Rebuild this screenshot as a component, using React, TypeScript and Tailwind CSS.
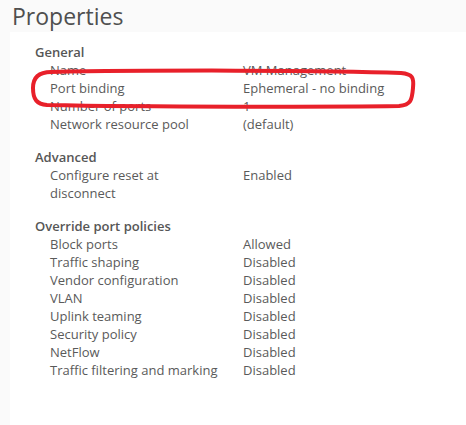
const sections = [
  {
    title: 'General',
    rows: [
      ['Name', 'VM Management'],
      ['Port binding', 'Ephemeral - no binding'],
      ['Number of ports', '1'],
      ['Network resource pool', '(default)'],
    ],
  },
  {
    title: 'Advanced',
    rows: [['Configure reset at\ndisconnect', 'Enabled']],
  },
  {
    title: 'Override port policies',
    rows: [
      ['Block ports', 'Allowed'],
      ['Traffic shaping', 'Disabled'],
      ['Vendor configuration', 'Disabled'],
      ['VLAN', 'Disabled'],
      ['Uplink teaming', 'Disabled'],
      ['Security policy', 'Disabled'],
      ['NetFlow', 'Disabled'],
      ['Traffic filtering and marking', 'Disabled'],
    ],
  },
];

export default function App() {
  return (
    <div className="relative h-[425px] w-[466px] overflow-hidden bg-[#fafafa] font-['Open_Sans',sans-serif] text-[#5a5a5a]">
      <h1 className="h-[32px] pl-[12px] pt-[1px] text-[23px] leading-[30px] text-[#4f4f4f]">Properties</h1>
      <div className="ml-[10px] h-[393px] bg-white pl-[25px] pt-[11px]">
        {sections.map((s) => (
          <div key={s.title} className="mb-[15px]">
            <div className="text-[13px] font-semibold leading-[18px] text-[#565656]">{s.title}</div>
            {s.rows.map(([label, value]) => (
              <div key={label} className="flex text-[13px] leading-[18px]">
                <div className="w-[208px] shrink-0 whitespace-pre-line pl-[15px]">{label}</div>
                <div>{value}</div>
              </div>
            ))}
          </div>
        ))}
      </div>
      <svg className="absolute left-[29px] top-[68px]" width="388" height="42" viewBox="0 0 388 42" fill="none">
        <path
          d="M22 4 C 120 2, 300 2, 372 5 C 384 6, 385 10, 384 20 C 383 32, 382 37, 370 38 C 300 39, 120 39, 18 37 C 8 36, 4 32, 4 20 C 4 10, 9 4, 22 4 Z"
          stroke="#e8202a"
          strokeWidth="4"
        />
      </svg>
    </div>
  );
}
